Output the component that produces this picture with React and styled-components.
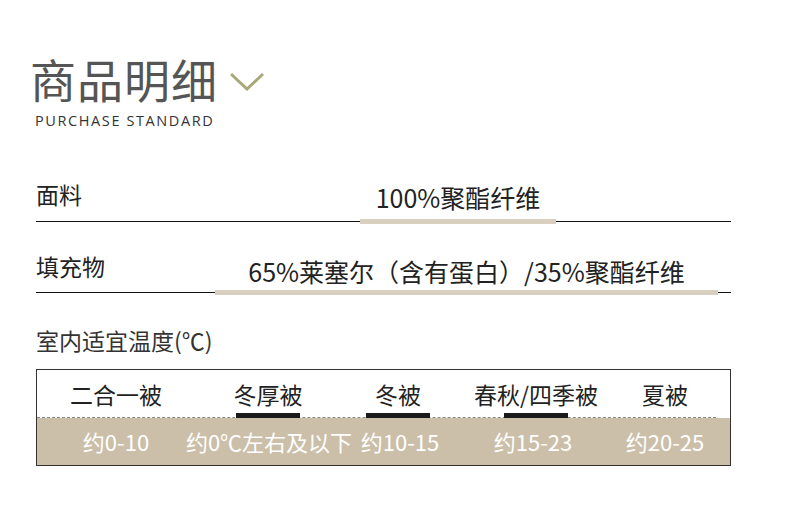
import styled, { createGlobalStyle } from "styled-components";

const GlobalStyle = createGlobalStyle`
  html, body {
    margin: 0;
    padding: 0;
    background: #fff;
  }
  body {
    font-family: "Noto Sans CJK SC", "Noto Sans", sans-serif;
    color: #222;
  }
`;

const Page = styled.div`
  width: 790px;
  height: 528px;
  box-sizing: border-box;
  padding: 53px 59px 0 36px;
  overflow: hidden;
`;

const Header = styled.div`
  display: flex;
  flex-direction: column;
`;

const TitleLine = styled.div`
  display: flex;
  align-items: center;
  gap: 11px;
  margin-left: -6px;
`;

const Title = styled.h1`
  margin: 0;
  font-size: 46px;
  font-weight: 400;
  line-height: 50px;
  color: #555;
  letter-spacing: 1px;
`;

const Chevron = styled.svg`
  width: 36px;
  height: 20px;
  margin-top: 6px;
`;

const Subtitle = styled.div`
  font-family: "Open Sans", "Noto Sans", sans-serif;
  font-size: 14.5px;
  line-height: 18px;
  letter-spacing: 1.6px;
  color: #333;
  margin-top: 9px;
  margin-left: -1px;
`;

const SpecRow = styled.div`
  display: grid;
  grid-template-columns: ${p => p.$cols};
  align-items: end;
  margin-top: ${p => p.$top}px;
`;

const Label = styled.div`
  grid-column: 1;
  font-size: 23px;
  line-height: 28px;
  color: #222;
  margin-bottom: ${p => p.$lift}px;
`;

const Value = styled.div`
  grid-column: 2;
  text-align: center;
  white-space: nowrap;
  font-size: 25px;
  line-height: 28px;
  color: #222;
  margin-bottom: ${p => p.$lift}px;
`;

const Rule = styled.div`
  grid-row: 2;
  height: 1px;
  background: #111;
  align-self: center;
`;

const Bar = styled.div`
  grid-row: 2;
  grid-column: 2;
  height: 5px;
  background: #d8cfbf;
`;

const Caption = styled.div`
  margin-top: 31px;
  font-size: 23px;
  line-height: 28px;
  color: #333;
`;

const Table = styled.div`
  margin-top: 15px;
  border: 1px solid #333;
  display: flex;
  flex-direction: column;
`;

const HeadRow = styled.div`
  display: grid;
  grid-template-columns: 158px 146px 114px 162px 96px;
  height: 47px;
  margin-right: 14px;
  border-bottom: 1px dashed #888;
`;

const HeadCell = styled.div`
  display: flex;
  flex-direction: column;
  align-items: center;
  justify-content: space-between;
  padding-top: 9px;
  font-size: 23px;
  line-height: 30px;
  color: #222;
  white-space: nowrap;
`;

const Marker = styled.div`
  width: 64px;
  height: 5px;
  margin-bottom: -1px;
  background: ${p => (p.$on ? "#1a1a1a" : "transparent")};
`;

const TempRow = styled.div`
  display: grid;
  grid-template-columns: 158px 148px 114px 152px 112px;
  height: 47px;
  background: #cbbfa9;
  align-items: center;
`;

const TempCell = styled.div`
  display: flex;
  justify-content: center;
  font-size: 22px;
  line-height: 28px;
  color: #fff;
  white-space: nowrap;
  padding-bottom: 1px;
`;

const quilts = [
  { name: "二合一被", temp: "约0-10", on: false },
  { name: "冬厚被", temp: "约0℃左右及以下", on: true },
  { name: "冬被", temp: "约10-15", on: true },
  { name: "春秋/四季被", temp: "约15-23", on: true },
  { name: "夏被", temp: "约20-25", on: false },
];

function Spec({ label, value, cols, top, labelLift, valueLift }) {
  return (
    <SpecRow $cols={cols} $top={top}>
      <Label $lift={labelLift}>{label}</Label>
      <Value $lift={valueLift}>{value}</Value>
      <Rule style={{ gridColumn: 1 }} />
      <Bar />
      <Rule style={{ gridColumn: 3 }} />
    </SpecRow>
  );
}

export default function App() {
  return (
    <>
      <GlobalStyle />
      <Page>
        <Header>
          <TitleLine>
            <Title>商品明细</Title>
            <Chevron viewBox="0 0 36 20">
              <polyline points="2,3 18,18 34,3" fill="none" stroke="#a8a878" strokeWidth="3" />
            </Chevron>
          </TitleLine>
          <Subtitle>PURCHASE STANDARD</Subtitle>
        </Header>

        <Spec label="面料" value="100%聚酯纤维" cols="324px 196px 175px" top={50} labelLift={11} valueLift={8} />
        <Spec label="填充物" value="65%莱塞尔（含有蛋白）/35%聚酯纤维" cols="179px 503px 13px" top={28} labelLift={10} valueLift={5} />

        <Caption>室内适宜温度(℃)</Caption>
        <Table>
          <HeadRow>
            {quilts.map(q => (
              <HeadCell key={q.name}>
                {q.name}
                <Marker $on={q.on} />
              </HeadCell>
            ))}
          </HeadRow>
          <TempRow>
            {quilts.map(q => (
              <TempCell key={q.name}>{q.temp}</TempCell>
            ))}
          </TempRow>
        </Table>
      </Page>
    </>
  );
}
